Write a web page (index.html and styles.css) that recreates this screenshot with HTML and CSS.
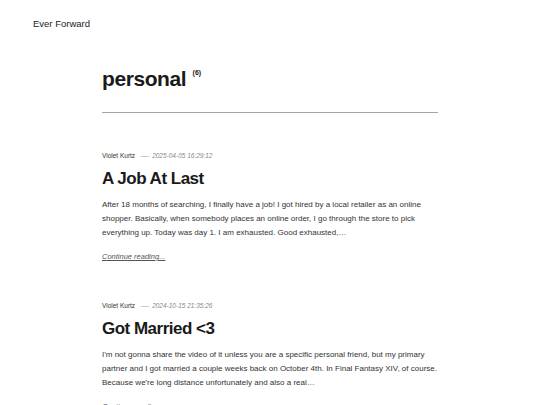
FILE: index.html
```html
<!DOCTYPE html>
<html>
<head>
<meta charset="utf-8">
<link rel="stylesheet" href="styles.css">
</head>
<body>
<header class="site-header">
  <a class="site-title" href="#">Ever Forward</a>
</header>
<main class="content">
  <h1 class="archive-title">personal <sup class="count">(6)</sup></h1>
  <article class="post">
    <div class="meta"><span class="author">Violet Kurtz</span><span class="sep"></span><time class="date">2025-04-05 16:29:12</time></div>
    <h2 class="post-title">A Job At Last</h2>
    <p class="excerpt">After 18 months of searching, I finally have a job! I got hired by a local retailer as an online shopper. Basically, when somebody places an online order, I go through the store to pick everything up. Today was day 1. I am exhausted. Good exhausted,…</p>
    <a class="more" href="#">Continue reading...</a>
  </article>
  <article class="post">
    <div class="meta"><span class="author">Violet Kurtz</span><span class="sep"></span><time class="date">2024-10-15 21:35:26</time></div>
    <h2 class="post-title">Got Married &lt;3</h2>
    <p class="excerpt">I'm not gonna share the video of it unless you are a specific personal friend, but my primary partner and I got married a couple weeks back on October 4th. In Final Fantasy XIV, of course. Because we're long distance unfortunately and also a real…</p>
    <a class="more" href="#">Continue reading...</a>
  </article>
</main>
</body>
</html>
```
FILE: styles.css
```css
html, body {
  margin: 0;
  padding: 0;
  background: #fff;
}
body {
  font-family: "Liberation Sans", Arial, sans-serif;
  color: #222;
}
.site-header {
  padding: 13px 33px 0;
  height: 44px;
}
.site-title {
  font-size: 9.5px;
  color: #222;
  text-decoration: none;
}
.content {
  width: 336px;
  margin: 0 auto;
}
.archive-title {
  margin: 9px 0 0;
  padding-bottom: 20px;
  border-bottom: 1px solid #a6a6a6;
  font-size: 21px;
  line-height: 26px;
  letter-spacing: -0.02em;
  color: #1a1a1a;
}
.count {
  font-size: 7px;
  letter-spacing: 0;
  vertical-align: top;
  position: relative;
  top: -6px;
  margin-left: 1px;
}
.post {
  padding-top: 38px;
  height: 112px;
}
.meta {
  font-size: 6.5px;
  line-height: 10px;
  color: #333;
  display: flex;
  align-items: center;
}
.sep {
  display: inline-block;
  width: 8px;
  height: 1px;
  background: #ccc;
  margin: 0 3px 0 6px;
}
.date {
  font-style: italic;
  color: #888;
}
.post-title {
  margin: 7px 0 0;
  font-size: 17px;
  line-height: 22px;
  letter-spacing: -0.03em;
  color: #1a1a1a;
}
.excerpt {
  margin: 8px 0 0;
  font-size: 8px;
  line-height: 14px;
  color: #333;
}
.more {
  display: inline-block;
  margin-top: 12px;
  font-size: 7.5px;
  font-style: italic;
  color: #555;
}
```
